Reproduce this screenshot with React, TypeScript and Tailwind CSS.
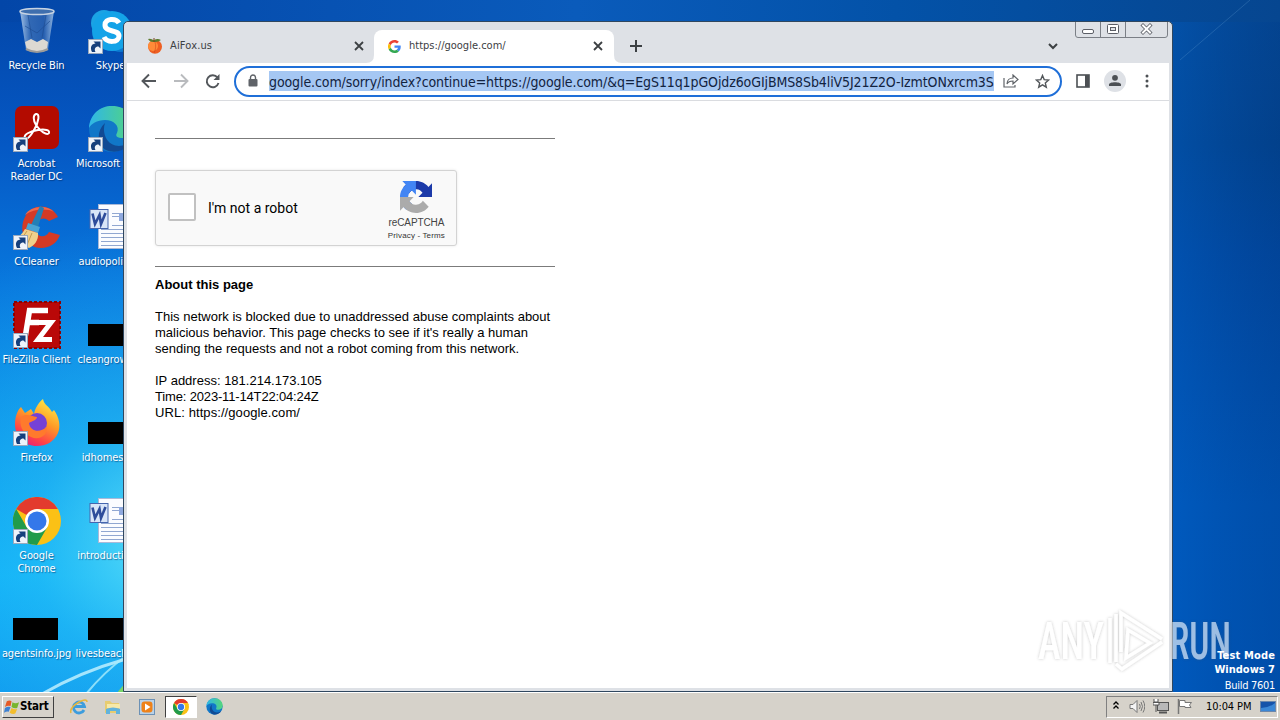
// src/App.tsx
import React from 'react';

const ShortcutArrow: React.FC = () => (
  <g>
    <rect x="0.5" y="32.5" width="14" height="14" fill="#eef3fa" stroke="#9aa9bd" />
    <path d="M4 45 C1.5 40 4 36.500 7.500 36.500 L5.500 34.500 H12.500 V41.500 L10.500 39.500 C7 39.500 6 42 7.500 45 Z" fill="#153f7c" />
  </g>
);

const RecycleBin: React.FC = () => (
  <svg width="48" height="48" viewBox="0 0 48 48">
    <defs>
      <linearGradient id="bin" x1="0" x2="1">
        <stop offset="0" stopColor="#b9d3ef" />
        <stop offset=".3" stopColor="#396eb6" />
        <stop offset=".7" stopColor="#2b62b0" />
        <stop offset="1" stopColor="#a5c5e8" />
      </linearGradient>
    </defs>
    <path d="M7 4 L13 43 Q24 48 35 43 L41 4 Z" fill="url(#bin)" opacity=".85" />
    <path d="M12 35 L18 32 L24 35 L30 32 L35 35 L34 43 Q24 47 14 43 Z" fill="#ddd9d2" />
    <path d="M15 8 L19 31 M33 8 L29 31 M12 19 L24 26 L37 14" stroke="#1f4f94" fill="none" opacity=".7" />
    <ellipse cx="24" cy="4.5" rx="17" ry="3" fill="#3f6fae" stroke="#c7d3e2" strokeWidth="1.5" />
    <path d="M13 42 Q24 48 35 42" stroke="#9c9b99" strokeWidth="2" fill="none" />
  </svg>
);

const Skype: React.FC = () => (
  <svg width="48" height="48" viewBox="0 0 48 48">
    <circle cx="16" cy="16" r="13" fill="#1ba3e4" />
    <circle cx="32" cy="32" r="13" fill="#0b78d0" />
    <circle cx="24" cy="24" r="20" fill="#14a3e8" />
    <path d="M31 16 C28 11 17 11 17 18 C17 26 31 22 31 29 C31 36 19 36 16 30" fill="none" stroke="#fff" strokeWidth="5" />
    <ShortcutArrow />
  </svg>
);

const Acrobat: React.FC = () => (
  <svg width="48" height="48" viewBox="0 0 48 48">
    <rect x="2" y="1" width="44" height="43" rx="7" fill="#b30b00" />
    <path d="M23 9 C27 8 26 17 21 25 C17 32 14 35 12 33 C10 30 17 26 25 25 C32 24 37 25 36 28 C34 31 27 26 23 20 C20 15 20 10 23 9 Z" fill="none" stroke="#fff" strokeWidth="2" />
    <ShortcutArrow />
  </svg>
);

const Edge: React.FC<{ size?: number; shortcut?: boolean }> = ({ size = 48, shortcut = true }) => (
  <svg width={size} height={size} viewBox="0 0 48 48">
    <defs>
      <linearGradient id="edgeTop" x1="0" x2="1">
        <stop offset="0" stopColor="#2fb6e8" />
        <stop offset="1" stopColor="#54d67b" />
      </linearGradient>
    </defs>
    <circle cx="24" cy="24" r="23" fill="#1177c8" />
    <path d="M1 23 C2 9 12 1 24 1 C38 1 47 11 47 21 C47 29 41 33 35 33 C29 33 27 31 29 28 C32 21 26 15 17 15 C9 15 3 19 1 23 Z" fill="url(#edgeTop)" />
    <path d="M17 18 C14 26 17 40 31 41 C36 41 41 38 43 36 C38 46 27 49 18 45 C9 40 8 26 17 18 Z" fill="#114a94" />
    {shortcut && <ShortcutArrow />}
  </svg>
);

const CCleaner: React.FC = () => (
  <svg width="48" height="48" viewBox="0 0 48 48">
    <path d="M45 14 C38 0 18 0 12 14 C5 27 12 45 28 45 C37 45 44 40 47 32 L36 29 C32 36 24 34 23 27 C21 17 31 12 36 18 Z" fill="#d43a25" />
    <path d="M12 12 C17 3 34 1 41 9 C34 5 20 6 12 12 Z" fill="#f0694b" />
    <path d="M27 3 L31 5 L25 24 L18 22 Z" fill="#237fb6" />
    <path d="M15 20 L27 24 L25 30 L13 26 Z" fill="#48a4d4" />
    <path d="M12 26 L25 30 C26 37 21 43 16 45 L1 36 C6 34 9 31 12 26 Z" fill="#efd08b" />
    <path d="M14 28 L7 38 M19 30 L14 42" stroke="#c69a4d" fill="none" />
    <ShortcutArrow />
  </svg>
);

const FileZilla: React.FC = () => (
  <svg width="48" height="48" viewBox="0 0 48 48">
    <rect x="1" y="1" width="46" height="46" fill="#b90808" stroke="#8d0000" strokeWidth="2" strokeDasharray="3 2" />
    <path d="M12 37 L16.500 9.500 H35 M15 21.500 H26" fill="none" stroke="#fff" strokeWidth="5.500" />
    <path d="M24 21.500 H38 L25 38.500 H39" fill="none" stroke="#fff" strokeWidth="5" />
    <ShortcutArrow />
  </svg>
);

const Firefox: React.FC = () => (
  <svg width="48" height="48" viewBox="0 0 48 48">
    <defs>
      <linearGradient id="fox" x1=".8" y1="0" x2=".3" y2="1">
        <stop offset="0" stopColor="#fff04a" />
        <stop offset=".45" stopColor="#ff9a26" />
        <stop offset=".8" stopColor="#ff4248" />
        <stop offset="1" stopColor="#e82078" />
      </linearGradient>
    </defs>
    <path d="M8 8 L12 14 L18 10 L21 15 C22 9 26 3 30 0 C31 6 36 7 39 13 L41 11 C46 18 48 27 45 34 C41 43 33 47 24 47 C11 47 2 38 2 25 C2 18 4 12 8 8 Z" fill="url(#fox)" />
    <circle cx="24" cy="24" r="10" fill="#7541d6" />
    <path d="M8 18 C13 14 18 17 24 18 C24 21 19 22 16 24 C17 33 28 34 33 28 C36 35 27 42 18 38 C9 34 6 26 8 18 Z" fill="#ff7a2c" />
    <ShortcutArrow />
  </svg>
);

const Chrome: React.FC<{ size?: number; shortcut?: boolean }> = ({ size = 48, shortcut = true }) => (
  <svg width={size} height={size} viewBox="0 0 48 48">
    <circle cx="24" cy="24" r="24" fill="#fbc116" />
    <path d="M24 24 L3.2 12 A24 24 0 0 1 44.8 12 Z" fill="#e33b2e" />
    <path d="M24 12 H44.8 L47 18 L36 24 Z" fill="#fbc116" />
    <path d="M3.2 12 L13.6 30 L24 36 L34.4 30 L24 48 A24 24 0 0 1 3.2 12 Z" fill="#219b4b" />
    <circle cx="24" cy="24" r="12" fill="#fff" />
    <circle cx="24" cy="24" r="9.5" fill="#3478ea" />
    {shortcut && <ShortcutArrow />}
  </svg>
);

const WordDoc: React.FC = () => (
  <svg width="48" height="48" viewBox="0 0 48 48">
    <rect x="10.5" y="1.5" width="36" height="44" fill="#fbfcff" stroke="#a9b9d8" />
    <path d="M24 10.500H34M24 13.500H34M24 22.500H44M13 26.500H43M13 30.500H43M13 34.500H43M13 38.500H43M13 42.500H43" stroke="#91a7d1" />
    <rect x="31" y="10" width="4" height="8" fill="#8fa9df" />
    <rect x="2" y="6.5" width="18" height="19" fill="#d9e5f8" stroke="#4666ae" />
    <path d="M4.500 10.500 L7 21 L11.500 12 L13 21 L17.500 10" fill="none" stroke="#2e4c9b" strokeWidth="2.6" />
  </svg>
);

const BlackThumb: React.FC = () => (
  <svg width="48" height="48" viewBox="0 0 48 48">
    <rect y="23" width="45" height="22" fill="#000" />
  </svg>
);

// second column labels run on underneath the window, so they carry their hidden width as padding
const desktopItems = [
  { label: 'Recycle Bin', icon: <RecycleBin />, space: 'max-w-[76px]' },
  { label: 'Skype', icon: <Skype />, space: 'pr-[2px]' },
  { label: 'Acrobat Reader DC', icon: <Acrobat />, space: 'max-w-[60px]' },
  { label: 'Microsoft', icon: <Edge />, space: 'pr-[27px]' },
  { label: 'CCleaner', icon: <CCleaner />, space: '' },
  { label: 'audiopolit', icon: <WordDoc />, space: 'pr-[18px]' },
  { label: 'FileZilla Client', icon: <FileZilla />, space: 'whitespace-nowrap' },
  { label: 'cleangrow', icon: <BlackThumb />, space: 'pr-[18px]' },
  { label: 'Firefox', icon: <Firefox />, space: '' },
  { label: 'idhomes', icon: <BlackThumb />, space: 'pr-[18px]' },
  { label: 'Google Chrome', icon: <Chrome />, space: 'max-w-[50px]' },
  { label: 'introducti', icon: <WordDoc />, space: 'pr-[22px]' },
  { label: 'agentsinfo.jpg', icon: <BlackThumb />, space: 'whitespace-nowrap' },
  { label: 'livesbeach', icon: <BlackThumb />, space: 'pr-[20px]' },
];

const Wallpaper: React.FC = () => (
  <svg className="absolute inset-0" width="1280" height="720" viewBox="0 0 1280 720">
    <defs>
      <linearGradient id="leftSky" x1="0" y1="0" x2="0" y2="1">
        <stop offset="0" stopColor="#0346a8" />
        <stop offset=".2" stopColor="#0558c4" />
        <stop offset=".4" stopColor="#0878de" />
        <stop offset=".62" stopColor="#0796ec" />
        <stop offset=".8" stopColor="#08acf8" />
        <stop offset="1" stopColor="#0a90ec" />
      </linearGradient>
      <linearGradient id="rightSky" x1="0" y1="0" x2="0" y2="1">
        <stop offset="0" stopColor="#064690" />
        <stop offset=".2" stopColor="#034189" />
        <stop offset=".35" stopColor="#02469c" />
        <stop offset=".7" stopColor="#0055b6" />
        <stop offset="1" stopColor="#0054b4" />
      </linearGradient>
      <linearGradient id="rightShade" x1="1170" x2="1280" y1="0" y2="0" gradientUnits="userSpaceOnUse">
        <stop offset="0" stopColor="#0060c8" stopOpacity=".45" />
        <stop offset="1" stopColor="#003f90" stopOpacity=".3" />
      </linearGradient>
      <linearGradient id="topSky" x1="0" x2="1">
        <stop offset="0" stopColor="#0346a8" />
        <stop offset=".45" stopColor="#0a5bbb" />
        <stop offset=".7" stopColor="#0352a8" />
        <stop offset="1" stopColor="#064690" />
      </linearGradient>
      <radialGradient id="glow" cx="160" cy="540" r="320" gradientUnits="userSpaceOnUse">
        <stop offset="0" stopColor="#66e4f8" stopOpacity=".9" />
        <stop offset=".4" stopColor="#3accf6" stopOpacity=".4" />
        <stop offset="1" stopColor="#2cc0f8" stopOpacity="0" />
      </radialGradient>
    </defs>
    <rect width="640" height="720" fill="url(#leftSky)" />
    <rect x="640" width="640" height="720" fill="url(#rightSky)" />
    <rect x="1170" y="22" width="110" height="700" fill="url(#rightShade)" />
    <rect width="1280" height="22" fill="url(#topSky)" />
    <rect width="200" height="720" fill="url(#glow)" />
    <path d="M42 694 Q80 672 126 659" stroke="#c8f4ff" strokeWidth="3" fill="none" opacity=".8" />
    <path d="M86 694 Q104 672 126 656" stroke="#a9ecfb" strokeWidth="2" fill="none" opacity=".8" />
    <path d="M116 694 L126 682 V694 Z" fill="#79d66a" />
    <path d="M1180 60 L1250 0" stroke="#5c97cd" opacity=".3" />
  </svg>
);

const GoogleG: React.FC = () => (
  <svg width="13" height="13" viewBox="0 0 48 48">
    <path fill="#EA4335" d="M24 9.5c3.5 0 6.7 1.2 9.2 3.6l6.9-6.9C35.9 2.4 30.5 0 24 0 14.6 0 6.5 5.4 2.6 13.2l8 6.2C12.400 13.700 17.700 9.500 24 9.500z" />
    <path fill="#4285F4" d="M47 24.500c0-1.600-.2-3.100-.4-4.500H24v9h12.900c-.6 3-2.200 5.500-4.800 7.200l7.700 6C44.400 38 47 31.800 47 24.500z" />
    <path fill="#FBBC05" d="M10.500 28.600c-.5-1.500-.8-3-.8-4.600s.3-3.100.8-4.600l-8-6.200C.9 16.500 0 20.100 0 24s.9 7.500 2.600 10.800l7.900-6.200z" />
    <path fill="#34A853" d="M24 48c6.500 0 11.900-2.100 15.900-5.800l-7.700-6c-2.200 1.500-4.900 2.300-8.200 2.300-6.300 0-11.600-4.200-13.500-9.900l-8 6.200C6.500 42.600 14.600 48 24 48z" />
  </svg>
);

const Peach: React.FC = () => (
  <svg width="16" height="16" viewBox="0 0 16 16">
    <circle cx="8" cy="8.800" r="7" fill="#ee5f22" />
    <circle cx="6" cy="8" r="5" fill="#ff8b38" />
    <path d="M8 4 C9 7 9 11 7 15" stroke="#c93d17" fill="none" opacity=".5" />
    <path d="M1 1 Q4 0 7 2.500 Q10 0 14 2 Q11 4.500 7 4 Q3 4.500 1 1 Z" fill="#5d7b2e" />
    <path d="M7 0 V4" stroke="#75431d" />
  </svg>
);

const CloseX: React.FC = () => (
  <svg width="10" height="10" viewBox="0 0 10 10">
    <path d="M1 1 L9 9 M9 1 L1 9" stroke="#3c4043" strokeWidth="1.800" />
  </svg>
);

const TabStrip: React.FC = () => (
  <div className="relative flex h-[41px] items-end bg-[#dee1e6] pl-[7px] text-[11px] text-[#3c4043]">
    <div className="flex h-[33px] w-[240px] items-center pb-px pl-[13px] pr-[10px]">
      <Peach />
      <span className="ml-[7px] mt-px flex-1 tracking-[0.15px]">AiFox.us</span>
      <CloseX />
    </div>
    <div className="relative flex h-[33px] w-[240px] items-center rounded-t-lg bg-white pb-px pl-[14px] pr-[11px]">
      <svg className="absolute -left-2 bottom-0" width="8" height="8">
        <path d="M8 0 V8 H0 Q8 8 8 0 Z" fill="#fff" />
      </svg>
      <GoogleG />
      <span className="ml-[8px] mt-px flex-1">https://google.com/</span>
      <CloseX />
      <svg className="absolute -right-2 bottom-0" width="8" height="8">
        <path d="M0 0 V8 H8 Q0 8 0 0 Z" fill="#fff" />
      </svg>
    </div>
    <svg className="mb-[11px] ml-4" width="12" height="12">
      <path d="M6 0 V12 M0 6 H12" stroke="#3c4043" strokeWidth="2" />
    </svg>
    <svg className="mb-[13px] ml-auto mr-[111px]" width="10" height="7">
      <path d="M1 1 L5 5 L9 1" stroke="#3c4043" strokeWidth="2" fill="none" />
    </svg>
    {/* Caption buttons */}
    <svg className="absolute right-0 -top-px" width="94" height="18" viewBox="0 0 94 18">
      <path d="M0.500 0 V14 Q0.500 16.500 3 16.500 H90 Q92.500 16.500 92.500 14 V0 M25.500 0 V16.500 M50.500 0 V16.500" fill="none" stroke="#7b7f86" />
      <rect x="7.500" y="8.500" width="11" height="4" rx="1.500" fill="#fff" stroke="#5b5e66" />
      <rect x="32.500" y="3.500" width="11" height="9" rx="1" fill="#fff" stroke="#5b5e66" />
      <rect x="35.500" y="6.500" width="5" height="3" fill="#dee1e6" stroke="#5b5e66" />
      <path d="M68 4.500 L75 11.500 M75 4.500 L68 11.500" stroke="#5b5e66" strokeWidth="3.600" strokeLinecap="square" />
      <path d="M68 4.500 L75 11.500 M75 4.500 L68 11.500" stroke="#fff" strokeWidth="2" strokeLinecap="square" />
    </svg>
  </div>
);

const Toolbar: React.FC = () => (
  <div className="flex h-[38px] items-center border-b border-[#dadce0] bg-white pb-px pl-[13px]">
    <svg width="82" height="16" viewBox="0 0 82 16" fill="none" strokeWidth="1.900">
      <path d="M16 8 H3 M9 1.500 L2.500 8 L9 14.500" stroke="#53575b" />
      <path d="M34 8 H47 M41 1.500 L47.500 8 L41 14.500" stroke="#b9bbbe" />
      <path d="M77.500 4.500 A6 6 0 1 0 78.500 10" stroke="#53575b" />
      <path d="M79.500 1 V7 H73.500 Z" fill="#53575b" />
    </svg>
    <div className="ml-[12px] flex h-[31px] w-[828px] items-center rounded-full border-2 border-[#1f6fd8] pl-3 pr-[9px]">
      <svg className="mb-px" width="10" height="13" viewBox="0 0 10 13">
        <rect x=".5" y="5" width="9" height="7.500" rx="1" fill="#5f6368" />
        <path d="M2.500 5 V3.500 A2.500 2.500 0 0 1 7.500 3.500 V5" stroke="#5f6368" strokeWidth="1.400" fill="none" />
      </svg>
      <div className="ml-[11px] h-5 w-[725px] shrink-0 overflow-hidden whitespace-nowrap bg-[#a5c7f3] text-[14px] leading-[22px] tracking-[-0.1px] text-[#12233f]">
        google.com/sorry/index?continue=https://google.com/&amp;q=EgS11q1pGOjdz6oGIjBMS8Sb4liV5J21Z2O-IzmtONxrcm3S
      </div>
      <svg className="ml-[9px] shrink-0" width="16" height="14" viewBox="0 0 16 14" fill="none" stroke="#5f6368" strokeWidth="1.200">
        <path d="M1 4 V13 H12 V11" />
        <path d="M4 10 C4 6 7 4 10 4 V1 L15 5.500 L10 10 V7 C7 7 5 8 4 10 Z" />
      </svg>
      <svg className="ml-4 shrink-0" width="15" height="15" viewBox="0 0 15 15">
        <path d="M7.500 1.500 L9.200 5.600 L13.600 6 L10.300 8.900 L11.300 13.200 L7.500 10.900 L3.700 13.200 L4.700 8.900 L1.400 6 L5.800 5.600 Z" fill="none" stroke="#53575b" strokeWidth="1.400" />
      </svg>
    </div>
    <svg className="ml-[14px]" width="14" height="14" viewBox="0 0 14 14">
      <rect x="1" y="1" width="12" height="12" fill="none" stroke="#4c5054" strokeWidth="1.600" />
      <rect x="9" y="1" width="4" height="12" fill="#4c5054" />
    </svg>
    <svg className="ml-[14px]" width="22" height="22" viewBox="0 0 22 22">
      <circle cx="11" cy="11" r="11" fill="#dee1e6" />
      <circle cx="11" cy="7.800" r="2.900" fill="#4c5054" />
      <path d="M5 16 V14.500 C5 11.500 17 11.500 17 14.500 V16 Z" fill="#4c5054" />
    </svg>
    <svg className="ml-[19px]" width="4" height="14">
      <circle cx="2" cy="2" r="1.500" fill="#4c5054" />
      <circle cx="2" cy="7" r="1.500" fill="#4c5054" />
      <circle cx="2" cy="12" r="1.500" fill="#4c5054" />
    </svg>
  </div>
);

const RecaptchaLogo: React.FC = () => (
  <svg width="32" height="32" viewBox="0 0 64 64">
    <path fill="#1c3aa9" d="M64 31.955l-.033-1.370V4.687l-7.160 7.160C50.948 4.674 42.033.093 32.050.093c-10.389 0-19.622 4.960-25.458 12.640l11.736 11.860a15.550 15.550 0 0 1 4.754-5.334c2.050-1.600 4.952-2.906 8.968-2.906.485 0 .86.057 1.135.163 4.976.393 9.288 3.140 11.828 7.124l-8.307 8.307L64 31.953" />
    <path fill="#4285f4" d="M31.862.094l-1.370.033H4.594l7.160 7.160C4.580 13.147 0 22.060 0 32.046c0 10.389 4.960 19.622 12.640 25.458L24.500 45.768a15.550 15.550 0 0 1-5.334-4.754c-1.600-2.050-2.906-4.952-2.906-8.968 0-.485.057-.86.163-1.135.393-4.976 3.140-9.288 7.124-11.828l8.307 8.307L31.860.095" />
    <path fill="#ababab" d="M.001 32.045l.033 1.370v25.898l7.160-7.160c5.860 7.173 14.774 11.754 24.760 11.754 10.389 0 19.622-4.960 25.458-12.640l-11.736-11.860a15.550 15.550 0 0 1-4.754 5.334c-2.050 1.600-4.952 2.906-8.968 2.906-.485 0-.86-.057-1.135-.163-4.976-.393-9.288-3.140-11.828-7.124l8.307-8.307c-10.522.04-22.400.066-27.295-.005" />
  </svg>
);

const CaptchaPage: React.FC = () => (
  <div className="flex-1 bg-white pl-[28px] pt-[37px] font-['Liberation_Sans',sans-serif] text-[13px] leading-4 text-black [font-stretch:normal]">
    <div className="w-[400px]">
      <hr className="border-[#7b7b7b]" />
      <div className="mt-[31px] flex h-[76px] w-[302px] items-center rounded-[3px] border border-[#d3d3d3] bg-[#f9f9f9] pl-3 pr-[11px] shadow-[0_0_3px_rgba(0,0,0,0.1)]">
        <div className="mb-0.5 size-7 rounded-[2px] border-2 border-[#c1c1c1] bg-white" />
        <span className="ml-3 flex-1 font-['Roboto',sans-serif] text-[14px]">I'm not a robot</span>
        <div className="flex flex-col items-center pt-[5px] text-[#555]">
          <RecaptchaLogo />
          <span className="mt-[3px] text-[10px] leading-[14px] tracking-[-0.1px] text-[#444]">reCAPTCHA</span>
          <span className="text-[8px] leading-[11px] tracking-[0.15px] text-[#333]">Privacy - Terms</span>
        </div>
      </div>
      <hr className="mt-5 border-[#7b7b7b]" />
      <h1 className="mt-[10px] font-bold">About this page</h1>
      <p className="mt-4 whitespace-nowrap tracking-[0.01px]">
        This network is blocked due to unaddressed abuse complaints about
        <br />
        malicious behavior. This page checks to see if it's really a human
        <br />
        sending the requests and not a robot coming from this network.
      </p>
      <div className="mt-4 whitespace-nowrap">
        <p>IP address: 181.214.173.105</p>
        <p className="tracking-[-0.16px]">Time: 2023-11-14T22:04:24Z</p>
        <p className="tracking-[0.08px]">URL: https://google.com/</p>
      </div>
    </div>
  </div>
);

const BrowserWindow: React.FC = () => (
  <div className="absolute left-[123px] top-[21px] flex h-[671px] w-[1050px] flex-col overflow-hidden rounded-t-[5px] border border-[#30475f] bg-[#dee1e6] px-[3px] pb-[3px]">
    <div className="flex flex-1 flex-col">
      <TabStrip />
      <Toolbar />
      <CaptchaPage />
    </div>
  </div>
);

const Watermark: React.FC = () => (
  <svg className="absolute left-[1030px] top-[604px]" width="210" height="76" viewBox="0 0 210 76">
    <defs>
      <filter id="halo" x="-10%" y="-10%" width="120%" height="120%">
        <feDropShadow dx="0" dy="0" stdDeviation="1.500" floodColor="#555" floodOpacity=".55" />
      </filter>
    </defs>
    <g filter="url(#halo)" opacity=".62">
      <g fill="#fff" fontFamily="'Roboto', sans-serif" fontSize="51" fontWeight="500">
        <text x="8" y="55" textLength="66" lengthAdjust="spacingAndGlyphs">ANY</text>
        <text x="140" y="55" textLength="61" lengthAdjust="spacingAndGlyphs">RUN</text>
      </g>
      <path d="M80 14 V59 M86 58 V10 M86 60 L92 65 L132 38 M91 48 V9 L132 35 M98 26 L120 39 L96 54 Z" fill="none" stroke="#fff" strokeWidth="3.500" />
    </g>
  </svg>
);

const Taskbar: React.FC = () => (
  <div className="absolute inset-x-0 bottom-0 flex h-7 items-center border-t border-white bg-[#d6d2ca] pl-0.5 pr-0.5 text-[11px] text-black">
    <div className="flex h-[22px] w-[52px] items-center border border-b-[#404040] border-l-white border-r-[#404040] border-t-white pl-px">
      <svg className="shrink-0" width="16" height="16" viewBox="0 0 17 16">
        <path d="M3 2 Q6 0 8 2 L7 7 Q4 6 1 8 Z" fill="#e65a25" />
        <path d="M9 3 Q12 5 16 3 L14 9 Q11 10 8 8 Z" fill="#78b52e" />
        <path d="M1 9 Q4 7 7 8 L5 13 Q3 12 0 14 Z" fill="#3d81d2" />
        <path d="M8 9 Q11 11 14 10 L12 15 Q9 16 6 14 Z" fill="#f3bd2b" />
      </svg>
      <span className="mt-px text-[11.5px] font-bold tracking-[-0.2px]">Start</span>
    </div>
    <div className="ml-[15px] flex items-center">
      {/* Internet Explorer */}
      <svg width="20" height="18" viewBox="0 0 20 18">
        <path d="M15 12 A5.500 5.500 0 1 1 15.500 8.500 H6" fill="none" stroke="#3d9ddd" strokeWidth="2.800" />
        <path d="M2 15 Q0 10 10 4 Q18 0 18 4" fill="none" stroke="#e7b73c" strokeWidth="1.500" />
      </svg>
      {/* Explorer */}
      <svg className="ml-[15px]" width="17" height="16" viewBox="0 0 17 16">
        <path d="M1 2 H6 L8 4 H15 V14 H1 Z" fill="#e7cc70" />
        <path d="M3 5 H16 V9 H3 Z" fill="#f7e9a8" />
        <path d="M2 15 V10 Q9 7 16 10 V15 H12 V12 H6 V15 Z" fill="#62b3dc" />
      </svg>
      {/* Media player */}
      <svg className="ml-[18px]" width="16" height="16" viewBox="0 0 16 16">
        <rect x=".5" y=".5" width="15" height="15" fill="#b9d2e8" stroke="#6c91b5" />
        <rect x="2.500" y="2.500" width="11" height="11" rx="3" fill="#ee8219" />
        <path d="M6 4.500 L11.500 8 L6 11.500 Z" fill="#fff" />
      </svg>
      <div className="ml-[10px] flex h-[22px] w-8 items-center justify-center border border-b-white border-l-[#404040] border-r-white border-t-[#404040] bg-white">
        <Chrome size={16} shortcut={false} />
      </div>
      <span className="ml-[9px]">
        <Edge size={17} shortcut={false} />
      </span>
    </div>
    {/* Notification area */}
    <div className="ml-auto flex h-[22px] w-[172px] items-center border border-b-white border-l-[#808080] border-r-white border-t-[#808080] pl-[6px]">
      <svg className="mb-[3px]" width="6" height="8" viewBox="0 0 6 8" fill="none" stroke="#000" strokeWidth="1.300">
        <path d="M.5 3.500 L3 1 L5.500 3.500 M.5 7.500 L3 5 L5.500 7.500" />
      </svg>
      <svg className="ml-[10px]" width="16" height="15" viewBox="0 0 16 15" fill="none" stroke="#777">
        <path d="M1 5.500 H4 L8 1.500 V13.500 L4 9.500 H1 Z" fill="#f4f4f4" />
        <path d="M10.500 5 Q12 7.500 10.500 10 M12 3 Q15 7.500 12 12 M14 1.500 Q17.500 7.500 14 13.500" />
      </svg>
      <svg className="ml-[8px]" width="16" height="15" viewBox="0 0 16 15">
        <rect x="4.500" y="3.500" width="11" height="8" fill="#b9b9b9" stroke="#555" />
        <path d="M6 13.500 H14" stroke="#555" strokeWidth="2" />
        <path d="M1 0 V3 H5 V0 M0 3.500 H6 V6 H0 Z M3 6 V13" fill="#fff" stroke="#555" />
      </svg>
      <svg className="ml-[8px]" width="16" height="15" viewBox="0 0 16 15">
        <path d="M1.500 0 V15" stroke="#777" strokeWidth="1.500" />
        <path d="M2.500 1.500 H8 V3.500 H14.500 L12.500 6 L14 8.500 H8 V7.500 H2.500 Z" fill="#fff" stroke="#777" />
      </svg>
      <span className="ml-[13px] mt-px tracking-[-0.1px]">10:04 PM</span>
      <svg className="ml-auto mr-px" width="16" height="14" viewBox="0 0 16 14">
        <rect x=".5" y="1.500" width="15" height="10" fill="#1553aa" stroke="#6c87ab" />
        <path d="M1 8 Q9 8 15 3 V11 H1 Z" fill="#3b87d6" />
      </svg>
    </div>
  </div>
);

const App: React.FC = () => {
  return (
    <div className="relative h-[720px] w-[1280px] overflow-hidden bg-[#0656bf] font-['DejaVu_Sans_Condensed','DejaVu_Sans',sans-serif] [font-stretch:condensed]">
      <Wallpaper />
      {/* Desktop icons */}
      <div className="relative grid w-[150px] auto-rows-[98px] grid-cols-[75px_75px] pt-[7px]">
        {desktopItems.map((item) => (
          <div key={item.label} className="flex flex-col items-center pr-[2px]">
            {item.icon}
            <span className={`mt-[4px] text-center text-[11px] leading-[13px] tracking-[-0.1px] text-white [text-shadow:1px_1px_1px_rgba(0,30,80,0.5)] ${item.space}`}>
              {item.label}
            </span>
          </div>
        ))}
      </div>
      <BrowserWindow />
      <Watermark />
      <div className="absolute bottom-[27px] right-[5px] text-right text-[11px] leading-[14px] text-white">
        <p className="font-bold tracking-[0.15px]">Test Mode</p>
        <p className="font-bold">Windows 7</p>
        <p className="mt-[2px] tracking-[-0.3px]">Build 7601</p>
      </div>
      <Taskbar />
    </div>
  );
};

export default App;
